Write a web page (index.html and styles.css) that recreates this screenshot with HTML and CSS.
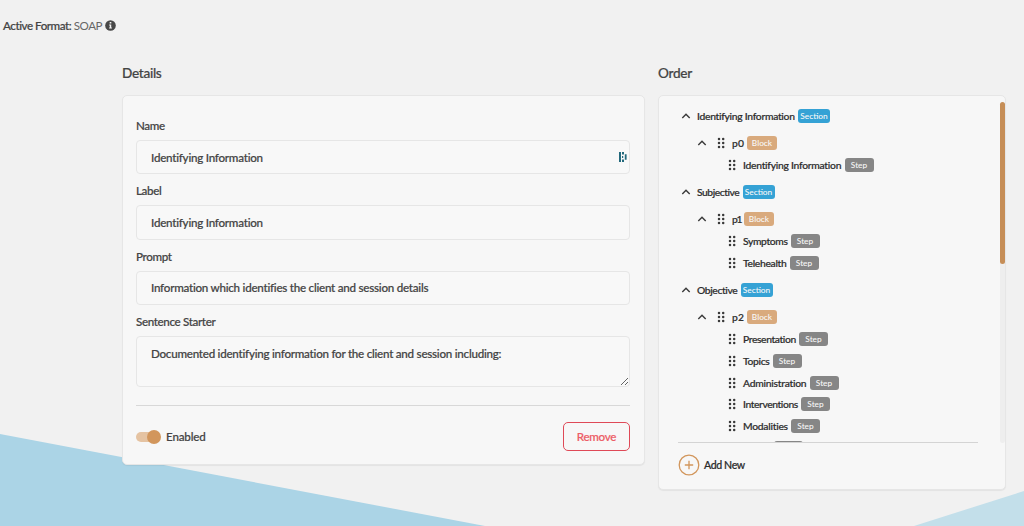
FILE: index.html
```html
<!DOCTYPE html>
<html lang="en">
<head>
  <meta charset="UTF-8">
  <meta name="viewport" content="width=device-width, initial-scale=1.0">
  <title>Note Format</title>
  <link rel="stylesheet" href="styles.css">
</head>
<body>
  <svg class="backdrop" viewBox="0 0 1024 526" preserveAspectRatio="none">
    <polygon points="0,434 485,526 0,526" fill="#abd4e6" />
    <polygon points="914,526 1024,491 1024,526" fill="#c3dfea" />
  </svg>

  <header class="format">
    <span>Active Format: <span class="format-name">SOAP</span></span>
    <svg class="info" viewBox="0 0 12 12">
      <circle cx="6" cy="6" r="5.8" fill="#484848" />
      <path d="M5.1 2.3h1.8v1.5H5.1zM4.5 4.8h2.3v3.3h.7v1.1h-3V8.1h.7V5.9h-.7z" fill="#f1f1f1" />
    </svg>
  </header>

  <main class="columns">
    <section class="details">
      <h2>Details</h2>
      <form class="panel details-panel">
        <label for="name">Name</label>
        <div class="field">
          <input type="text" id="name" value="Identifying Information">
          <svg class="autofill" viewBox="0 0 8 10">
            <path d="M0 0h2v10H0zM3 0h2v2.4H3zM3 4h1.2v2H3zM3 7.6h2V10H3zM5.8 2.3h1.8v5.4H5.8z" fill="#23697c" />
          </svg>
        </div>

        <label for="label">Label</label>
        <input type="text" id="label" value="Identifying Information">

        <label for="prompt">Prompt</label>
        <input type="text" id="prompt" value="Information which identifies the client and session details">

        <label for="starter">Sentence Starter</label>
        <textarea id="starter">Documented identifying information for the client and session including:</textarea>

        <div class="actions">
          <div class="toggle"><span class="switch"></span>Enabled</div>
          <button type="button" class="remove">Remove</button>
        </div>
      </form>
    </section>

    <section class="order">
      <h2>Order</h2>
      <div class="panel order-panel">
        <div class="scroll">
          <div class="tree" id="tree"></div>
          <div class="track"><div class="thumb"></div></div>
        </div>
        <div class="add">
          <svg class="plus" viewBox="0 0 22 22">
            <circle cx="11" cy="11" r="9.8" />
            <path d="M11 6.8v8.4M6.8 11h8.4" />
          </svg>
          Add New
        </div>
      </div>
    </section>
  </main>

  <script src="script.js"></script>
</body>
</html>
```

FILE: styles.css
```css
* { box-sizing: border-box; }
body { margin: 0; height: 526px; overflow: hidden; background: #f1f1f1; color: #444; font-family: Lato, "Liberation Sans", sans-serif; font-size: 11.6px; font-weight: 500; letter-spacing: -0.24px; -webkit-text-stroke: 0.2px; }
.backdrop { position: absolute; left: 0; top: 0; width: 100%; height: 100%; z-index: -1; }

.format { display: flex; align-items: center; gap: 3px; height: 16px; margin: 17px 0 0 3px; letter-spacing: -0.45px; }
.format-name { color: #666; font-weight: 400; -webkit-text-stroke: 0; }
.info { width: 11px; height: 11px; }

.columns { display: flex; align-items: flex-start; gap: 13px; padding: 32px 18px 0 122px; }
.details { width: 523px; }
.order { width: 348px; }
h2 { margin: 0 0 13px; height: 17px; line-height: 17px; font-size: 13.6px; font-weight: 500; letter-spacing: -0.3px; }
.panel { border: 1px solid #e6e6e6; border-radius: 5px; background: #f7f7f7; box-shadow: 0 1px 1px rgba(0, 0, 0, 0.06); }

.details-panel { display: flex; flex-direction: column; height: 370px; padding: 22px 14px 0 13px; }
label { height: 16px; line-height: 16px; margin-bottom: 6px; letter-spacing: -0.35px; }
input, textarea { width: 100%; height: 34.3px; margin: 0 0 9px; padding: 0 14px; border: 1px solid #e6e6e6; border-radius: 4px; background: #f8f8f8; color: #444; font: inherit; letter-spacing: inherit; }
.field { position: relative; display: flex; }
.autofill { position: absolute; right: 3px; top: 12px; width: 8px; height: 10px; }
textarea { height: 51px; padding: 9px 14px; line-height: 16px; }

.actions { display: flex; justify-content: space-between; align-items: flex-start; margin-top: 9px; padding-top: 16px; border-top: 1px solid #d8d8d8; }
.toggle { display: flex; align-items: center; gap: 5px; height: 30px; letter-spacing: -0.15px; }
.switch { position: relative; width: 25px; height: 10px; border-radius: 5px; background: linear-gradient(to right, #e5c3a2 20px, transparent 20px); }
.switch::after { content: ""; position: absolute; right: 0; top: -2px; width: 14px; height: 14px; border-radius: 50%; background: #d2965c; }
.remove { width: 67px; height: 29px; padding: 0; border: 1px solid #df4957; border-radius: 5px; background: transparent; color: #ed5c65; font: inherit; letter-spacing: -0.3px; }

.order-panel { height: 395px; padding-top: 6px; }
.scroll { display: flex; height: 341px; }
.tree { flex: 1; height: 341px; margin-left: 19px; margin-right: 22px; padding-top: 3px; overflow: hidden; border-bottom: 1px solid #d4d4d4; color: #2c2c2c; font-size: 10.3px; }
.track { width: 5px; border-radius: 3px; background: #eee; }
.thumb { height: 162px; border-radius: 3px; background: #c68e57; }

.row { display: flex; align-items: center; height: 21.8px; }
.row.section { margin-bottom: 5.4px; }
.row.step + .section { margin-top: 5.4px; }
.row.block { padding-left: 16px; }
.row.step { padding-left: 50px; }
.chevron { width: 10px; height: 8px; margin: 0 6px 0 3px; fill: none; stroke: #3a3a3a; stroke-width: 1.4; }
.grip { width: 8px; height: 12px; margin-right: 7px; fill: #3a3a3a; }
.block .grip { margin-left: 4px; }
.badge { height: 14px; margin-left: 3px; border-radius: 3px; color: #f8f8f8; font-size: 8.3px; line-height: 14px; letter-spacing: 0; text-align: center; -webkit-text-stroke: 0; }
.section .badge { width: 32px; background: #35a2d5; }
.block .badge { width: 30px; background: #d9aa7d; }
.step .badge { width: 29px; background: #868686; }

.add { display: flex; align-items: center; gap: 4px; margin: 11px 0 0 19px; height: 22px; color: #2c2c2c; font-size: 10.6px; letter-spacing: -0.4px; }
.plus { width: 22px; height: 22px; fill: none; stroke: #d2965c; stroke-width: 1.3; }
```

FILE: script.js
```javascript
const rows = [
  ['section', 'Identifying Information', 98],
  ['block', 'p0', 12],
  ['step', 'Identifying Information', 98.5],
  ['section', 'Subjective', 42.5],
  ['block', 'p1', 9],
  ['step', 'Symptoms', 44.5],
  ['step', 'Telehealth', 43.5],
  ['section', 'Objective', 40.5],
  ['block', 'p2', 12],
  ['step', 'Presentation', 53],
  ['step', 'Topics', 26.5],
  ['step', 'Administration', 63.5],
  ['step', 'Interventions', 55],
  ['step', 'Modalities', 45],
  ['step', '', 27.5]
];

const badges = { section: 'Section', block: 'Block', step: 'Step' };
const chevron = '<svg class="chevron" viewBox="0 0 10 8"><path d="M1.3 6 5 2.3 8.7 6"/></svg>';
const dots = [2, 6, 10].map(y => `<circle cx="2" cy="${y}" r="1.25"/><circle cx="6.2" cy="${y}" r="1.25"/>`).join('');
const grip = `<svg class="grip" viewBox="0 0 8 12">${dots}</svg>`;

document.getElementById('tree').innerHTML = rows.map(([type, text, width]) => `
  <div class="row ${type}">
    ${type !== 'step' ? chevron : ''}${type !== 'section' ? grip : ''}
    <span class="text" style="width: ${width}px">${text}</span>
    <span class="badge">${text ? badges[type] : ''}</span>
  </div>`).join('');

document.querySelectorAll('.text').forEach(el => {
  if (!el.textContent) return;
  el.style.letterSpacing = '0px';
  el.style.whiteSpace = 'nowrap';
  const range = document.createRange();
  range.selectNodeContents(el);
  const spare = el.getBoundingClientRect().width - range.getBoundingClientRect().width;
  el.style.letterSpacing = `${spare / el.textContent.length}px`;
});
```
